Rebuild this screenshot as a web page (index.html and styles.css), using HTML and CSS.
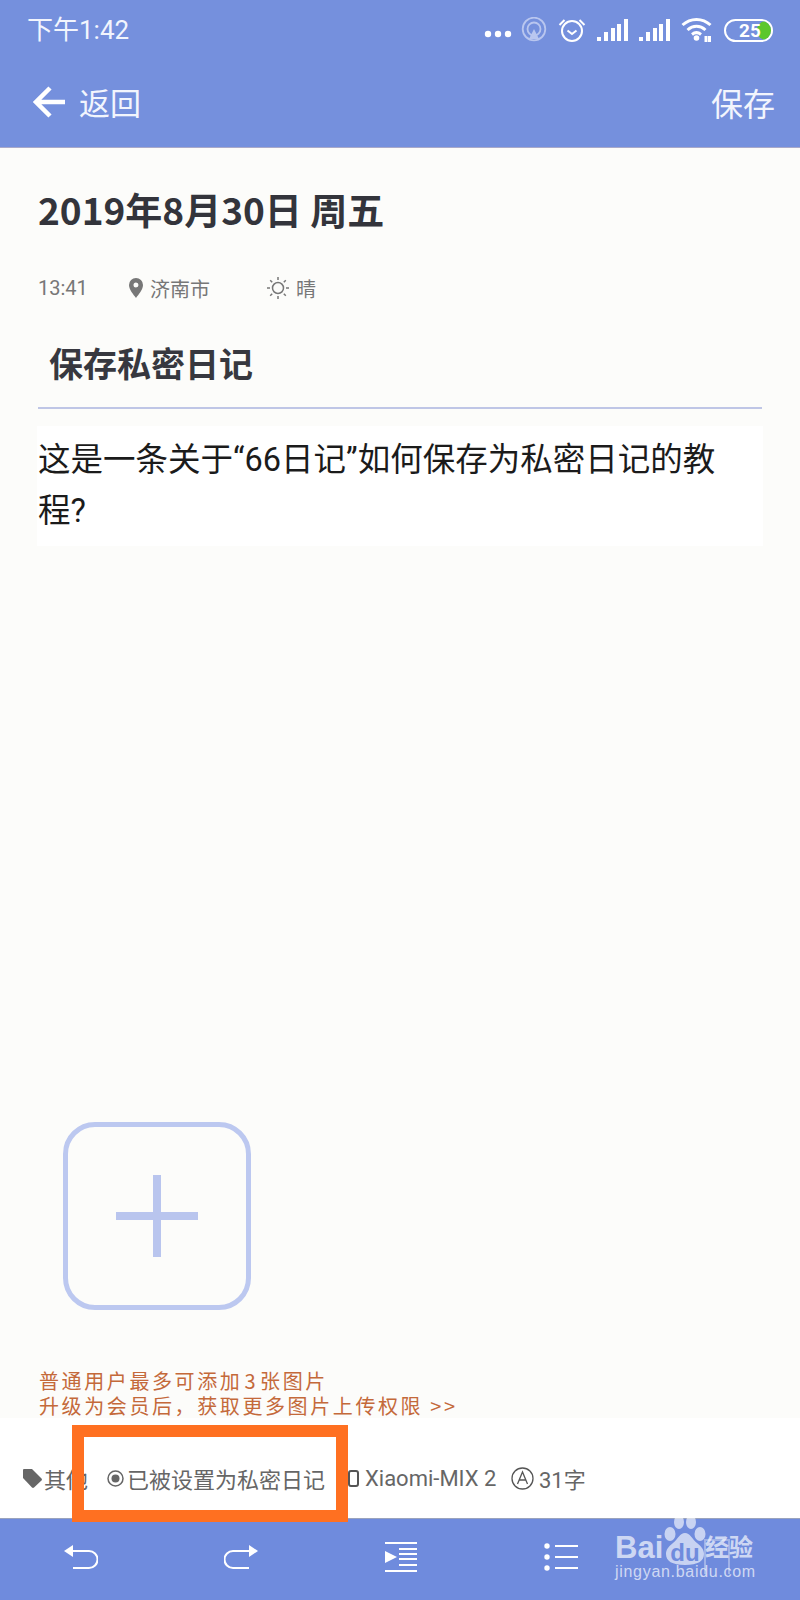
FILE: index.html
```html
<!DOCTYPE html>
<html lang="zh-CN">
<head>
<meta charset="utf-8">
<title>日记</title>
<link rel="stylesheet" href="styles.css">
</head>
<body>
<div class="phone">
  <header class="top">
    <div class="status">
      <span class="clock">下午1:42</span>
      <div class="status-icons">
        <svg width="30" height="8" viewBox="0 0 30 8" class="i-dots"><circle cx="4" cy="4" r="3.2"/><circle cx="14" cy="4" r="3.2"/><circle cx="24" cy="4" r="3.2"/></svg>
        <svg width="26" height="26" viewBox="0 0 26 26" class="i-cast"><circle cx="13" cy="12" r="11.3"/><circle cx="13" cy="12" r="6.5"/><path class="fill" d="M13 12l5 10H8z"/></svg>
        <svg width="28" height="26" viewBox="0 0 28 26" class="i-alarm"><circle cx="14" cy="14" r="10"/><path d="M9.500 13.500l4.500 3.500 4.500-3.500M1.500 8l5-5M26.500 8l-5-5"/></svg>
        <svg width="31" height="23" viewBox="0 0 31 23" class="i-signal"><rect x="0" y="18" width="4" height="4"/><rect x="7" y="13" width="4" height="9"/><rect x="14" y="9" width="4" height="13"/><rect x="20" y="5" width="4" height="17"/><rect x="27" y="0" width="4" height="22"/></svg>
        <svg width="31" height="23" viewBox="0 0 31 23" class="i-signal"><rect x="0" y="18" width="4" height="4"/><rect x="7" y="13" width="4" height="9"/><rect x="14" y="9" width="4" height="13"/><rect x="20" y="5" width="4" height="17"/><rect x="27" y="0" width="4" height="22"/></svg>
        <svg width="32" height="26" viewBox="0 0 32 26" class="i-wifi"><path d="M1.500 8C9.500 .5 21.500 .5 29.500 8M6.500 13c5.500-5 12.500-5 18 0M11 17.500c3-2.500 6-2.500 9 0M25 19v6M28.500 19v6"/><circle class="fill" cx="15.500" cy="21" r="2.800"/></svg>
        <div class="battery"><span class="level"></span><span class="pct">25</span></div>
      </div>
    </div>
    <nav class="bar">
      <div class="back">
        <svg width="34" height="32" viewBox="0 0 34 32" class="i-back"><path d="M32 16H4M17 2L3 16l14 14"/></svg>
        <span>返回</span>
      </div>
      <span class="save">保存</span>
    </nav>
  </header>

  <main class="content">
    <h1 class="date">2019年8月30日 周五</h1>
    <div class="meta">
      <span class="meta-time">13:41</span>
      <span class="meta-place">
        <svg width="14" height="20" viewBox="0 0 14 20" class="i-pin"><path fill-rule="evenodd" d="M7 0a7 7 0 0 1 7 7c0 4.500-4.500 9.500-7 13C4.500 16.500 0 11.500 0 7a7 7 0 0 1 7-7zm0 4.500a2.500 2.500 0 1 0 0 5 2.500 2.500 0 0 0 0-5z"/></svg>
        济南市
      </span>
      <span class="meta-weather">
        <svg width="24" height="24" viewBox="0 0 24 24" class="i-sun"><circle cx="12" cy="12" r="5.500"/><path d="M12 1v3M12 20v3M1 12h3M20 12h3M4.200 4.200l2 2M17.800 17.800l2 2M4.200 19.800l2-2M17.800 6.200l2-2"/></svg>
        晴
      </span>
    </div>
    <h2 class="subject">保存私密日记</h2>
    <p class="body-text">这是一条关于“66日记”如何保存为私密日记的教程?</p>

    <div class="spacer"></div>

    <div class="add">
      <svg width="82" height="82" viewBox="0 0 82 82" class="i-plus"><rect x="0" y="37" width="82" height="8"/><rect x="37" y="0" width="8" height="82"/></svg>
    </div>

    <p class="notice">普通用户最多可添加<span class="num">3</span>张图片<br>升级为会员后，获取更多图片上传权限 &gt;&gt;</p>

    <div class="tags">
      <span class="tag tag-other">
        <svg width="19" height="19" viewBox="0 0 19 19" class="i-tag"><path d="M1 0h8l9.500 9.500a1.500 1.500 0 0 1 0 2L11 18.500a1.500 1.500 0 0 1-2 0L0 9V1a1 1 0 0 1 1-1z"/></svg>
        其他
      </span>
      <span class="tag tag-private">
        <svg width="17" height="17" viewBox="0 0 17 17" class="i-radio"><circle cx="8.500" cy="8.500" r="7.500"/><circle class="fill" cx="8.500" cy="8.500" r="4"/></svg>
        已被设置为私密日记
      </span>
      <span class="tag tag-device">
        <svg width="11" height="17" viewBox="0 0 11 17" class="i-device"><rect x="1" y="1" width="9" height="15" rx="2"/></svg>
        Xiaomi-MIX 2
      </span>
      <span class="tag tag-count">
        <svg width="23" height="23" viewBox="0 0 23 23" class="i-count"><circle cx="11.500" cy="11.500" r="10.500"/><path d="M6.500 17l5-12 5 12M8.500 13h6"/></svg>
        31字
      </span>
    </div>
  </main>

  <footer class="toolbar">
    <svg width="34" height="24" viewBox="0 0 34 24" class="tool"><path d="M8 6h17a8.500 8.500 0 0 1 0 17H9"/><path class="fill" d="M0 6l9-6v12z"/></svg>
    <svg width="34" height="24" viewBox="0 0 34 24" class="tool"><path d="M26 6H9a8.500 8.500 0 0 0 0 17h16"/><path class="fill" d="M34 6l-9-6v12z"/></svg>
    <svg width="34" height="30" viewBox="0 0 34 30" class="tool"><path d="M1 1h32M15 7h18M15 12h18M15 17h18M15 23h18M1 29h32"/><path class="fill" d="M1 9l12 6L1 21z"/></svg>
    <svg width="34" height="28" viewBox="0 0 34 28" class="tool"><path d="M11 3h23M11 14h23M11 25h23"/><circle class="fill" cx="3" cy="3" r="2.700"/><circle class="fill" cx="3" cy="14" r="2.700"/><circle class="fill" cx="3" cy="25" r="2.700"/></svg>
    <svg width="26" height="36" viewBox="0 0 26 36" class="tool tool-faint"><path d="M1 35V1h24v34"/></svg>
  </footer>

  <div class="highlight"></div>

  <div class="watermark">
    <svg width="42" height="52" viewBox="0 0 42 52" class="paw"><ellipse cx="6" cy="19" rx="5.500" ry="7"/><ellipse cx="15" cy="7" rx="5" ry="7"/><ellipse cx="27" cy="7" rx="5" ry="7"/><ellipse cx="36" cy="19" rx="5.500" ry="7"/><path d="M21 18c5 0 7 6 12 10 5 4 7 7 7 11 0 7-6 11-19 11S2 46 2 39c0-4 2-7 7-11 5-4 7-10 12-10z"/></svg>
    <div class="wm-line"><span class="wm-bai">Bai</span><span class="wm-du">du</span><span class="wm-jy">经验</span></div>
    <div class="wm-url">jingyan.baidu.com</div>
  </div>
</div>
</body>
</html>
```
FILE: styles.css
```css
* { box-sizing: border-box; }
html, body { margin: 0; padding: 0; }
body { font-family: "Noto Sans CJK SC", Roboto, sans-serif; background: #fcfcfa; }

.phone {
  position: relative;
  width: 800px;
  height: 1600px;
  display: flex;
  flex-direction: column;
  overflow: hidden;
  background: #fcfcfa;
}

/* Header */
.top { height: 148px; flex: none; background: #7590dd; border-bottom: 1px solid #a9a9c9; color: #fff; }
.status { height: 60px; display: flex; align-items: center; justify-content: space-between; padding: 0 27px 0 27px; }
.clock { font-family: Roboto, "Noto Sans CJK SC", sans-serif; font-size: 26px; line-height: 30px; color: #f2f5fd; }
.status-icons { display: flex; align-items: center; }
svg { display: block; flex: none; }
.fill { fill: currentColor; stroke: none; }
.i-dots { fill: #fff; margin-right: 7px; margin-top: 8px; }
.i-cast { fill: none; stroke: #b9c6ef; stroke-width: 1.800; color: #b9c6ef; margin-right: 11px; }
.i-alarm { fill: none; stroke: #fff; stroke-width: 2; margin-right: 11px; }
.i-signal { fill: #fff; margin-right: 11px; }
.i-wifi { fill: none; stroke: #fff; stroke-width: 3; color: #fff; margin-right: 11px; }
.battery {
  position: relative;
  width: 49px;
  height: 23px;
  border: 2px solid #fff;
  border-radius: 12px;
  overflow: hidden;
}
.level { position: absolute; right: 0; top: 0; bottom: 0; width: 14px; border-radius: 9px 0 0 9px; background: #5cc72c; }
.pct { position: absolute; left: 13px; top: 0; font-family: Roboto, sans-serif; font-size: 19px; font-weight: 700; line-height: 19px; color: #fff; }

.bar { height: 87px; display: flex; align-items: center; justify-content: space-between; padding: 0 25px 4px 33px; }
.back { display: flex; align-items: center; gap: 12px; font-size: 31px; line-height: 40px; color: #f2f5fd; }
.i-back { fill: none; stroke: #fff; stroke-width: 4.500; }
.save { font-size: 32px; line-height: 40px; color: #f2f5fd; }

/* Content */
.content { flex: 1; display: flex; flex-direction: column; min-height: 0; }
.date { margin: 38px 0 0 38px; font-size: 37px; line-height: 46px; font-weight: 700; color: #33343b; }
.meta { display: flex; align-items: center; margin: 41px 0 0 38px; height: 30px; font-size: 20px; color: #777; }
.meta-time { font-family: Roboto, sans-serif; width: 91px; }
.meta-place { display: flex; align-items: center; gap: 7px; width: 137px; }
.i-pin { fill: #777; }
.meta-weather { display: flex; align-items: center; gap: 6px; }
.i-sun { fill: none; stroke: #777; stroke-width: 1.500; }
.subject {
  margin: 37px 38px 0;
  padding: 0 0 21px 11px;
  border-bottom: 2px solid #bfc6e6;
  font-size: 34px;
  line-height: 46px;
  font-weight: 700;
  color: #37383f;
}
.body-text {
  margin: 17px 37px 0;
  background: #fff;
  padding: 9px 30px 9px 1px;
  font-family: Roboto, "Noto Sans CJK SC", sans-serif;
  font-size: 32.500px;
  line-height: 51px;
  color: #1b1b1b;
}
.spacer { flex: 1; }
.add {
  width: 188px;
  height: 188px;
  margin-left: 63px;
  border: 5px solid #bcc8f0;
  border-radius: 32px;
  display: flex;
  align-items: center;
  justify-content: center;
}
.i-plus { fill: #b9c5ee; }
.notice { margin: 58px 0 0 39px; font-size: 20px; line-height: 25px; letter-spacing: 2.600px; color: #c4693a; }
.num { padding: 0 2px; }
.tags { display: flex; align-items: center; height: 100px; padding: 38px 0 18px 23px; margin-top: 0; font-size: 22px; color: #666; white-space: nowrap; background: #fff; }
.tag { display: flex; align-items: center; gap: 3px; }
.tag-other { width: 84px; gap: 2px; }
.tag-private { width: 241px; }
.tag-device { width: 163px; gap: 6px; font-family: Roboto, "Noto Sans CJK SC", sans-serif; }
.tag-count { gap: 5px; font-family: Roboto, "Noto Sans CJK SC", sans-serif; }
.i-tag { fill: #666; }
.i-radio { fill: none; stroke: #666; stroke-width: 1.500; color: #666; }
.i-device { fill: none; stroke: #555; stroke-width: 2; }
.i-count { fill: none; stroke: #555; stroke-width: 1.300; }

/* Toolbar */
.toolbar {
  height: 82px;
  flex: none;
  background: #6f8bdd;
  border-top: 1px solid #9aa3bd;
  display: flex;
  align-items: center;
  justify-content: space-between;
  padding: 0 70px 6px 64px;
  color: #fff;
}
.tool { fill: none; stroke: #fff; stroke-width: 2; }
.tool-faint { opacity: .35; }

/* Overlays */
.highlight {
  position: absolute;
  left: 72px;
  top: 1425px;
  width: 276px;
  height: 97px;
  border: 12px solid #ff7021;
}
.watermark {
  position: absolute;
  left: 615px;
  top: 1515px;
  width: 150px;
  color: rgba(255,255,255,.68);
  font-family: "Liberation Sans", "Noto Sans CJK SC", sans-serif;
}
.paw { position: absolute; left: 49px; top: 0; fill: rgba(255,255,255,.62); }
.wm-line { position: absolute; left: 0; top: 16px; display: flex; align-items: center; width: 150px; height: 34px; }
.wm-bai { font-size: 31px; font-weight: 700; line-height: 34px; }
.wm-du { position: relative; top: 5px; margin-left: 7px; font-size: 24px; font-weight: 700; line-height: 28px; color: #6f8bdd; }
.wm-jy { position: absolute; left: 90px; top: 0; font-size: 24px; font-weight: 700; line-height: 34px; white-space: nowrap; }
.wm-url { position: absolute; left: 0; top: 47px; font-size: 16px; letter-spacing: .7px; line-height: 20px; white-space: nowrap; }
```
